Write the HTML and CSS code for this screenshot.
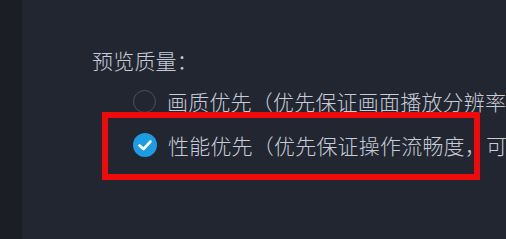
FILE: index.html
```html
<!DOCTYPE html>
<html lang="zh-CN">
<head>
  <meta charset="UTF-8">
  <title>预览质量</title>
  <link rel="stylesheet" href="styles.css">
</head>
<body>
  <div class="page">
    <div class="sidebar"></div>
    <div class="settings">
      <div class="title">预览质量：</div>
      <div class="options">
        <label class="option">
          <span class="radio"></span>
          <span class="label">画质优先（优先保证画面播放分辨率</span>
        </label>
        <label class="option checked">
          <span class="radio">
            <svg width="24" height="24" viewBox="0 0 24 24"><path d="M6.5 12.5l4 3.5 7-7.5" fill="none" stroke="#fff" stroke-width="2.6" stroke-linecap="round" stroke-linejoin="round"/></svg>
          </span>
          <span class="label">性能优先（优先保证操作流畅度，可</span>
        </label>
      </div>
      <div class="highlight"></div>
    </div>
  </div>
</body>
</html>
```

FILE: styles.css
```css
body {
  margin: 0;
  background-color: #222630;
  font-family: "Noto Sans CJK SC", "Noto Sans", sans-serif;
  overflow: hidden;
}

.page {
  display: flex;
  width: 506px;
  height: 239px;
  overflow: hidden;
}

.sidebar {
  width: 22px;
  flex-shrink: 0;
  background-color: #1b1e25;
}

.settings {
  position: relative;
  flex: 1;
  min-width: 0;
  padding: 47px 0 0 70px;
  color: #c6ccd8;
  font-size: 21px;
  font-weight: 300;
  letter-spacing: 0.2px;
  white-space: nowrap;
}

.title {
  line-height: 26px;
}

.options {
  display: flex;
  flex-direction: column;
  gap: 18px;
  margin-top: 15px;
  margin-left: 41px;
}

.option {
  display: flex;
  align-items: center;
  gap: 11px;
  line-height: 26px;
}

.radio {
  width: 21px;
  height: 21px;
  border: 1.5px solid #4a505e;
  border-radius: 50%;
  flex-shrink: 0;
}

.option.checked .radio {
  width: 24px;
  height: 24px;
  border: none;
  background-color: #1d9ce3;
  display: flex;
}

.highlight {
  position: absolute;
  left: 80px;
  top: 112px;
  width: 366px;
  height: 56px;
  border: 6px solid #f00a0a;
}
```
